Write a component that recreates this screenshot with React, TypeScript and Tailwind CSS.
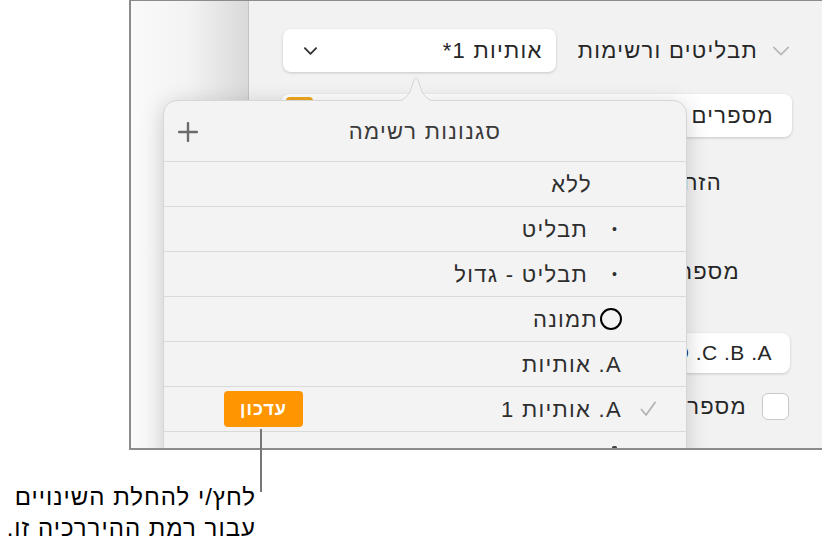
import React from "react";

const font = { fontFamily: '"Liberation Sans", "DejaVu Sans", sans-serif' };

function Chevron({ className, stroke = "#333", width = 2 }: { className?: string; stroke?: string; width?: number }) {
  return (
    <svg viewBox="0 0 16 10" className={className} fill="none">
      <path d="M2 2 L8 8 L14 2" stroke={stroke} strokeWidth={width} strokeLinecap="round" strokeLinejoin="round" />
    </svg>
  );
}

function Row({ children, left }: { children: React.ReactNode; left?: React.ReactNode }) {
  return (
    <div className="h-[45px] border-t border-[#dadada] flex items-center pr-[30px] pl-[60px] shrink-0">
      {children}
      <div className="mr-auto">{left}</div>
    </div>
  );
}

function Popover() {
  const check = (
    <svg viewBox="0 0 16 16" className="w-[16px] h-[16px]" fill="none">
      <path d="M1.5 8.5 L6 14 L15 1.5" stroke="#b3b3b3" strokeWidth="1.8" strokeLinecap="round" strokeLinejoin="round" />
    </svg>
  );
  return (
    <div className="absolute left-[32px] top-[99px] w-[524px] h-[420px] bg-[#f3f3f3] rounded-t-[14px] border border-[#d6d6d6] shadow-[0_4px_22px_rgba(0,0,0,0.18)] flex flex-col text-[22px] tracking-[1.3px] text-[#2e2e2e]" dir="rtl">
      <svg viewBox="0 0 48 26" className="absolute top-[-25px] right-[246px] w-[48px] h-[26px]">
        <path d="M0 26 C10 26 14 22 18 16 L22 4 C23 1 25 1 26 4 L30 16 C34 22 38 26 48 26 Z" fill="#f3f3f3" stroke="#d6d6d6" strokeWidth="1" />
        <rect x="0" y="25" width="48" height="2" fill="#f3f3f3" />
      </svg>
      <div className="h-[60px] flex items-center justify-center relative shrink-0">
        <span className="text-[#3a3a3a]">סגנונות רשימה</span>
        <svg viewBox="0 0 20 20" className="absolute left-[14px] top-[21px] w-[20px] h-[20px]">
          <path d="M10 1 V19 M1 10 H19" stroke="#6b6b6b" strokeWidth="2.4" strokeLinecap="round" />
        </svg>
      </div>
      <Row>
        <span className="w-[34px]" />
        <span className="mr-[30px]">ללא</span>
      </Row>
      <Row>
        <span className="w-[34px]" />
        <span className="w-[14px] text-center text-[14px]">•</span>
        <span className="mr-[20px]">תבליט</span>
      </Row>
      <Row>
        <span className="w-[34px]" />
        <span className="w-[14px] text-center text-[14px]">•</span>
        <span className="mr-[20px]">תבליט - גדול</span>
      </Row>
      <Row>
        <span className="w-[34px]" />
        <span className="w-[22px] h-[22px] rounded-full border-[2.5px] border-black shrink-0" />
        <span className="mr-[2px]">תמונה</span>
      </Row>
      <Row>
        <span className="w-[34px]" />
        <span>A. אותיות</span>
      </Row>
      <Row
        left={
          <button className="w-[79px] h-[36px] rounded-[4px] bg-[#ff9500] text-white text-[18px] tracking-[1px] font-semibold flex items-center justify-center">
            עדכון
          </button>
        }
      >
        <span className="w-[34px] flex justify-start">{check}</span>
        <span>A. אותיות 1</span>
      </Row>
      <div className="h-[45px] border-t border-[#dadada] shrink-0 pr-[69px] pt-[14px]">
        <span className="block w-[5px] h-[3px] rounded-full bg-[#444]" />
      </div>
    </div>
  );
}

function Inspector() {
  return (
    <div className="flex-1 bg-[#f2f2f2] pr-[30px] flex flex-col text-[22px] tracking-[1.3px] text-[#262626]" dir="rtl">
      <div className="mt-[28px] h-[43px] flex items-center">
        <Chevron className="w-[22px] h-[12px] ml-[12px]" stroke="#b8b8b8" width={1.5} />
        <span>תבליטים ורשימות</span>
        <div className="mr-[22px] w-[273px] h-[43px] bg-white rounded-[8px] shadow-[0_1px_3px_rgba(0,0,0,0.18)] flex items-center pr-[13px] pl-[20px]">
          <span dir="ltr">*1 אותיות</span>
          <Chevron className="mr-auto w-[15px] h-[10px]" />
        </div>
      </div>
      <div className="mt-[22px] ml-[32px] h-[43px] bg-white rounded-[8px] shadow-[0_1px_3px_rgba(0,0,0,0.18)] flex items-center pr-[18px]">
        <span>מספרים</span>
        <span className="mr-auto ml-[5px] self-start mt-[3px] w-[27px] h-[22px] rounded-[4px] bg-[#f0a81c]" />
      </div>
      <div className="mt-[33px] h-[24px] pr-[70px] flex items-center">
        <span>הזחה</span>
      </div>
      <div className="mt-[65px] h-[24px] pr-[52px] flex items-center">
        <span>מספרים</span>
      </div>
      <div className="mt-[50px] h-[40px] w-[160px] mr-[2px] bg-white rounded-[8px] shadow-[0_1px_3px_rgba(0,0,0,0.18)] flex items-center justify-start pr-[18px] overflow-hidden whitespace-nowrap text-[21px] tracking-[0.5px]">
        <span dir="ltr" className="shrink-0">.E .D .C .B .A</span>
      </div>
      <div className="mt-[20px] h-[27px] flex items-center mr-[3px]">
        <span className="w-[27px] h-[27px] rounded-[6px] bg-white border border-[#c9c9c9]" />
        <span className="mr-[15px]">מספרים</span>
      </div>
    </div>
  );
}

export default function App() {
  return (
    <div className="w-[822px] h-[551px] bg-white relative overflow-hidden" style={font}>
      <div className="ml-[129px] h-[450px] border-l-2 border-t border-b-2 border-[#8c8c8c] flex overflow-hidden relative">
        <div className="w-[118px] bg-gradient-to-r from-[#fafafa] via-[#f3f3f3] to-[#d9d9d9] border-r border-[#c4c4c4]" />
        <Inspector />
        <Popover />
      </div>
      <div className="absolute left-[260px] top-[429px] w-[2px] h-[63px] bg-[#777]" />
      <div className="mt-[31px] w-[256px] text-right text-[24px] tracking-[1px] leading-[31px] text-black whitespace-nowrap" dir="rtl">
        <div>לחץ/י להחלת השינויים</div>
        <div>עבור רמת ההיררכיה זו.</div>
      </div>
    </div>
  );
}
